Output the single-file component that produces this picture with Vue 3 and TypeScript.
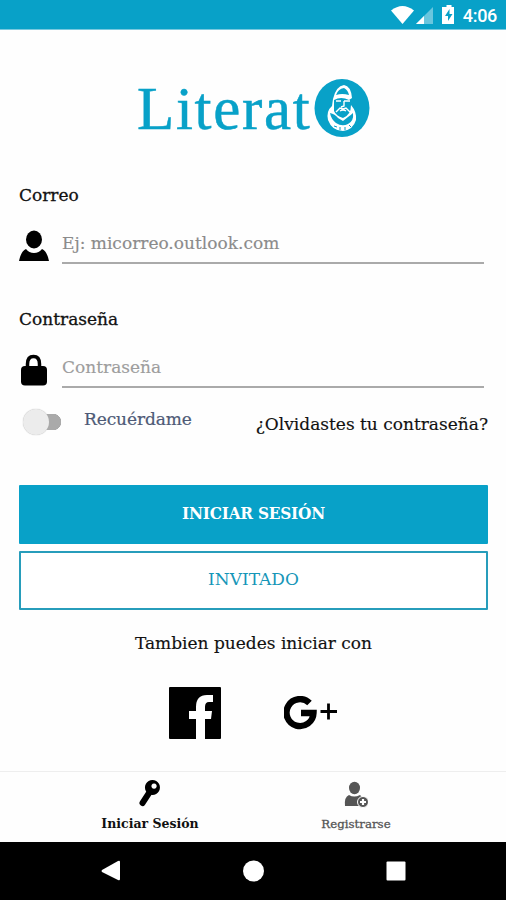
<script setup lang="ts">
import { ref } from 'vue'

const email = ref('')
const password = ref('')
const remember = ref(false)
</script>

<template>
  <div class="screen">
    <header class="status">
      <svg class="status-icons" width="68" height="22" viewBox="0 0 68 22">
        <path d="M0 6.500Q11.500-2.500 23 6.500L11.500 20Z" fill="#fff" />
        <path d="M25 20 42 3V20Z" fill="#fff" opacity=".4" />
        <path d="M25 20 33 12V20Z" fill="#fff" />
        <path d="M53 3h2.500V1h5V3H63v17H51V3Z" fill="#fff" />
        <path d="m58.500 5-4.500 7h3v5l4.500-7h-3Z" fill="#08a1c8" />
      </svg>
      <span class="clock">4:06</span>
    </header>

    <main class="body">
      <div class="logo">
        <span class="wordmark">Literat</span>
        <svg width="56" height="60" viewBox="0 0 56 60">
          <ellipse cx="28" cy="30" rx="27.500" ry="29" fill="#08a1c8" />
          <path d="M19 21Q22 8 30 7Q37 8 38 20L35 22Q27 18 20 22V33Q22 38 29 40Q37 37 37 27Q43 34 42 42Q39 52 29 53Q18 53 14 42Q12 33 18 28Z" fill="#fff" />
          <path d="M22 17Q24 11 30 10Q34 12 35 17Q28 15 22 17ZM16 35Q21 36 24 40L29 43 34 39Q37 37 39 35Q40 43 34 46Q28 49 22 45Q17 41 16 35Z" fill="#08a1c8" />
          <path d="M22 23h5M30 23h6M30 23v5l-3 1M22 34l4-4 3 1 3-1 4 4M26 33q3-2 6 0M19 28v5" fill="none" stroke="#fff" stroke-width="1.400" />
          <path d="m20 48 3 1m3 0v3m5-3v3m4-5 2 2" fill="none" stroke="#08a1c8" />
        </svg>
      </div>

      <label class="label" for="email">Correo</label>
      <div class="field">
        <svg class="field-icon" width="30" height="32" viewBox="0 0 30 32">
          <ellipse cx="15" cy="9.500" rx="8" ry="9" />
          <path d="M0 31Q2 21 7 19Q10 23 15 23T23 19Q28 21 30 31Z" />
        </svg>
        <input id="email" v-model="email" class="input" type="text" placeholder="Ej: micorreo.outlook.com">
      </div>

      <label class="label second" for="password">Contraseña</label>
      <div class="field">
        <svg class="field-icon" width="30" height="32" viewBox="0 0 30 32">
          <path d="M8.500 14V10Q8.500 2.500 14.500 2.500T20.500 10V14" fill="none" stroke="#000" stroke-width="3.500" />
          <rect x="2" y="12" width="26" height="19.500" rx="4" />
        </svg>
        <input id="password" v-model="password" class="input pass" type="password" placeholder="Contraseña">
      </div>

      <div class="options">
        <button class="switch" :class="{ on: remember }" type="button" aria-label="Recuérdame" @click="remember = !remember">
          <span class="knob" />
        </button>
        <span class="remember">Recuérdame</span>
        <a class="forgot">¿Olvidastes tu contraseña?</a>
      </div>

      <button class="btn primary" type="button">INICIAR SESIÓN</button>
      <button class="btn outline" type="button">INVITADO</button>

      <p class="also">Tambien puedes iniciar con</p>
      <div class="social">
        <svg width="52" height="52" viewBox="0 0 52 52">
          <rect width="52" height="52" rx="1" />
          <path d="M27 52V32H20V24H27V20Q27 8 38 8H44V15H40Q36 15 36 20V24H43L42 32H36V52Z" fill="#fff" />
        </svg>
        <svg width="54" height="34" viewBox="0 0 54 34">
          <path d="M25.500 7A13.500 13.500 0 1 0 29.500 17H17" fill="none" stroke="#000" stroke-width="6.400" />
          <path d="M44.500 7.500V23.500M36.500 15.500H53" stroke="#000" stroke-width="2.800" />
        </svg>
      </div>
    </main>

    <nav class="tabs">
      <a class="tab active">
        <svg width="24" height="28" viewBox="0 0 24 28">
          <path d="M11 13 4.500 23" stroke="#000" stroke-width="6" stroke-linecap="round" />
          <path fill-rule="evenodd" d="M14.500 0A7.500 7.500 0 1 1 14.400 0ZM16 3.500A2.600 2.600 0 1 0 16.100 3.500Z" />
        </svg>
        <span>Iniciar Sesión</span>
      </a>
      <a class="tab">
        <svg width="24" height="28" viewBox="0 0 24 28" fill="#555">
          <ellipse cx="10.500" cy="8" rx="5.500" ry="6.200" />
          <path d="M1 26Q0 17 5 15Q10 18 16 15L19 18V26Z" />
          <circle cx="19" cy="22" r="5.500" stroke="#fff" />
          <path d="M19 19V25M16 22H22" stroke="#fff" stroke-width="2.200" />
        </svg>
        <span>Registrarse</span>
      </a>
    </nav>

    <footer class="system">
      <svg width="20" height="22" viewBox="0 0 20 22"><path d="M2 10 18 1Q20 0 20 2V19Q20 21 18 20L2 12Q1 11 2 10Z" fill="#fff" /></svg>
      <svg width="22" height="22" viewBox="0 0 22 22"><circle cx="11.500" cy="11" r="10.500" fill="#fff" /></svg>
      <svg width="20" height="20" viewBox="0 0 20 20"><rect x=".5" y=".5" width="19" height="19" rx="1" fill="#fff" /></svg>
    </footer>
  </div>
</template>

<style>
body { margin: 0; background: #fff; }
</style>

<style scoped>
* { box-sizing: border-box; }
.screen { width: 506px; height: 900px; display: flex; flex-direction: column; overflow: hidden; background: #fefefe; color: #111; font-family: "DejaVu Serif", serif; font-size: 17px; }
.status { flex: none; height: 30px; padding: 4px 9px 0 391px; display: flex; justify-content: space-between; background: #08a1c8; border-bottom: 1px solid #78c9df; }
.clock { color: #fff; font: 500 18px/24px Roboto, sans-serif; letter-spacing: -.3px; }
.body { flex: 1; min-height: 0; padding: 0 18px 0 19px; display: flex; flex-direction: column; }
.logo { flex: none; height: 60px; margin: 48px 0 0 118px; display: flex; }
.wordmark { width: 177px; color: #08a1c8; font: 61px/62px "Liberation Serif", serif; letter-spacing: 1.7px; white-space: nowrap; -webkit-text-stroke: .5px #08a1c8; }
.label { flex: none; height: 24px; margin-top: 45px; line-height: 24px; -webkit-text-stroke: .3px; }
.label.second { margin-top: 42px; }
.field { flex: none; height: 58px; display: flex; }
.field-icon { flex: none; margin-top: 23px; }
.input { width: 422px; height: 45px; margin: 12px 0 0 13px; padding: 5px 0 0; border: 0; border-bottom: 2px solid #aaa; border-radius: 0; outline: 0; background: none; color: #111; font: inherit; }
.input::placeholder { color: #8b8b8b; opacity: 1; -webkit-text-stroke: .15px; }
.input.pass::placeholder { color: #9d9d9d; }
.options { flex: none; height: 96px; padding-top: 20px; display: flex; align-items: flex-start; }
.switch { flex: none; width: 39px; height: 26px; margin-left: 4px; padding: 0; border: 0; display: flex; align-items: center; background: linear-gradient(#aaa, #aaa) 10px 5px / 20px 16px no-repeat, radial-gradient(circle at 30px 13px, #aaa 8px, transparent 8.500px); }
.knob { width: 26px; height: 26px; border-radius: 50%; background: #ececec; box-shadow: 0 0 1px #aaa; }
.switch.on .knob { margin-left: 12px; }
.remember { margin-left: 22px; line-height: 21px; color: #4e5a76; letter-spacing: -.1px; -webkit-text-stroke: .2px; }
.forgot { margin-left: auto; line-height: 30px; white-space: nowrap; -webkit-text-stroke: .15px; }
.btn { flex: none; height: 59px; width: 469px; margin: 0; padding: 0 0 3px; border: 2px solid #08a1c8; border-radius: 1px; font: inherit; }
.primary { background: #08a1c8; color: #fff; font-family: "DejaVu Serif Condensed", "DejaVu Serif", serif; font-stretch: condensed; font-size: 17px; font-weight: 700; letter-spacing: -.2px; }
.outline { margin-top: 7px; background: #fff; color: #1696b8; border-color: #279dbb; }
.also { flex: none; margin: 21px 0 0; height: 24px; line-height: 24px; text-align: center; -webkit-text-stroke: .15px; }
.social { margin: 32px 0 0 150px; display: flex; align-items: center; gap: 63px; }
.tabs { flex: none; height: 71px; padding: 0 47px; display: flex; border-top: 1px solid #eee; }
.tab { flex: 1; padding-top: 8px; display: flex; flex-direction: column; align-items: center; gap: 7px; color: #555; font-size: 11.800px; line-height: 18px; -webkit-text-stroke: .3px; }
.tab.active { color: #111; font-size: 12.500px; font-weight: 700; -webkit-text-stroke: 0; }
.system { flex: none; height: 58px; padding: 0 100px; display: flex; align-items: center; justify-content: space-between; background: #000; }
</style>
